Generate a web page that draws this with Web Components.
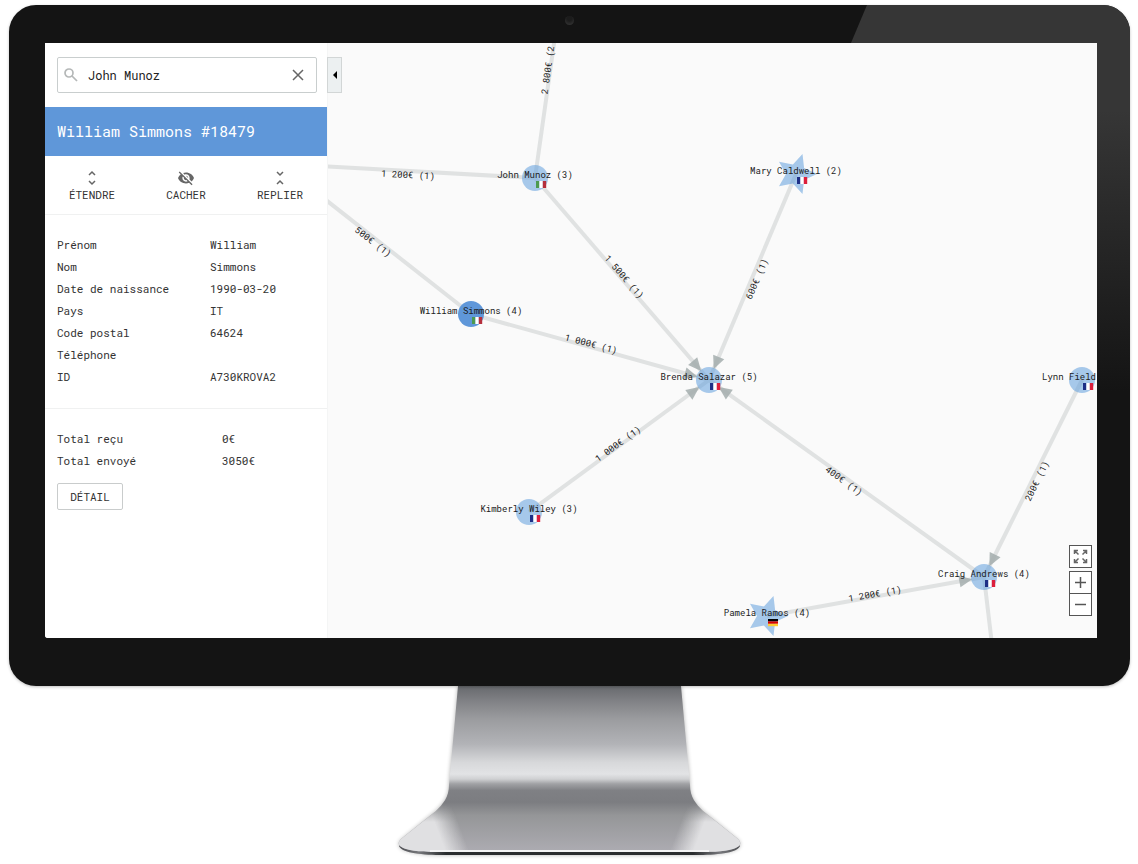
<!DOCTYPE html>
<html lang="fr">
<head>
<meta charset="utf-8">
<title>Exploration du réseau</title>
<style>
  body { margin: 0; background: #fff; font-family: "Roboto Mono", "DejaVu Sans Mono", "Liberation Mono", monospace; color: #333; }
</style>
</head>
<body>
<desktop-monitor>
  <person-panel slot="screen"></person-panel>
  <transfer-graph slot="screen"></transfer-graph>
</desktop-monitor>

<template id="monitor-template">
  <style>
    :host { display: flex; flex-direction: column; min-height: 100vh; box-sizing: border-box; padding: 5px 8px 0 9px; }
    .case { position: relative; flex: 1; display: flex; border-radius: 27px; background: #141414; padding: 38px 33px 48px 36px; box-shadow: 0 1px 3px rgba(0,0,0,.25); }
    .glare { position: absolute; inset: 0; border-radius: 27px; overflow: hidden; }
    .glare::before { content: ""; position: absolute; inset: 0 0 auto auto; width: 440px; height: 420px; background: linear-gradient(#363636 25%, #141414 92%); clip-path: polygon(177px 0, 100% 0, 100% 100%, 0 100%); }
    .camera { position: absolute; top: 11px; left: 50%; width: 9px; height: 9px; margin-left: -5px; border-radius: 50%; background: radial-gradient(circle at 50% 30%, #1c1c1c 30%, #3a3a3a); }
    .screen { position: relative; flex: 1; display: flex; min-width: 0; background: #fafafa; border-radius: 0 0 0 3px; overflow: hidden; }
    .stand { display: block; align-self: center; width: 360px; height: 178px; flex: none; }
  </style>
  <div class="case">
    <div class="glare"></div>
    <div class="camera"></div>
    <div class="screen"><slot name="screen"></slot></div>
  </div>
  <svg class="stand" viewBox="390 686 360 178" aria-hidden="true">
    <defs>
      <linearGradient id="metal" x1="0" y1="686" x2="0" y2="852" gradientUnits="userSpaceOnUse">
        <stop offset="0" stop-color="#67696d"/><stop offset=".09" stop-color="#808185"/>
        <stop offset=".2" stop-color="#9b9c9f"/><stop offset=".35" stop-color="#b2b3b7"/>
        <stop offset=".46" stop-color="#d7d8da"/><stop offset=".53" stop-color="#e2e3e5"/>
        <stop offset=".56" stop-color="#d0d1d3"/><stop offset=".59" stop-color="#a0a1a4"/>
        <stop offset=".63" stop-color="#7f8084"/><stop offset=".7" stop-color="#7c7d81"/>
        <stop offset=".78" stop-color="#959698"/><stop offset="1" stop-color="#adacb2"/>
      </linearGradient>
      <linearGradient id="leftShine" x1="435" y1="824" x2="456" y2="816" gradientUnits="userSpaceOnUse">
        <stop offset="0" stop-color="#e0e0e2"/><stop offset="1" stop-color="#e0e0e2" stop-opacity="0"/>
      </linearGradient>
      <linearGradient id="rightShine" x1="704" y1="824" x2="683" y2="816" gradientUnits="userSpaceOnUse">
        <stop offset="0" stop-color="#e0e0e2"/><stop offset="1" stop-color="#e0e0e2" stop-opacity="0"/>
      </linearGradient>
      <linearGradient id="fade" x1="0" y1="803" x2="0" y2="822" gradientUnits="userSpaceOnUse">
        <stop offset="0" stop-color="#000"/><stop offset="1" stop-color="#fff"/>
      </linearGradient>
      <mask id="fadeIn" maskUnits="userSpaceOnUse" x="390" y="790" width="360" height="74">
        <rect x="390" y="790" width="360" height="74" fill="url(#fade)"/>
      </mask>
      <linearGradient id="rim" x1="398" y1="0" x2="741" y2="0" gradientUnits="userSpaceOnUse">
        <stop offset="0" stop-color="#4b4c50"/><stop offset=".06" stop-color="#77787c"/>
        <stop offset=".14" stop-color="#2a2d2f"/><stop offset=".86" stop-color="#2a2d2f"/>
        <stop offset=".94" stop-color="#77787c"/><stop offset="1" stop-color="#4b4c50"/>
      </linearGradient>
      <filter id="soft" x="-5%" y="-5%" width="110%" height="115%"><feGaussianBlur stdDeviation="2"/></filter>
    </defs>
    <path d="M458 686 449 785C449 797 443 804 436 811L401 840C397 844 399 848 404 850C416 854 430 855 445 855H694C709 855 723 854 735 850C740 848 742 844 738 840L703 811C696 804 690 797 690 785L681 686Z" fill="#000" opacity=".3" filter="url(#soft)"/>
    <path d="M399 846C401 852 418 855 440 855H699C721 855 738 852 740 846L735 840H404Z" fill="url(#rim)"/>
    <path d="M458 686 449 785C449 797 443 804 436 811L401 839C396 844 400 847 406 849C416 852 430 852 445 852H694C709 852 723 852 733 849C739 847 743 844 738 839L703 811C696 804 690 797 690 785L681 686Z" fill="url(#metal)"/>
    <g mask="url(#fadeIn)">
      <path d="M443 800Q441 806 436 811L401 839C396 844 400 847 406 849C416 852 430 852 445 852H490V800Z" fill="url(#leftShine)"/>
      <path d="M696 800Q698 806 703 811L738 839C743 844 739 847 733 849C723 852 709 852 694 852H649V800Z" fill="url(#rightShine)"/>
    </g>
    <path d="M430 851H709" stroke="#f4f4f5" stroke-width="2"/>
  </svg>
</template>

<template id="panel-template">
  <style>
    :host { display: block; flex: none; width: 282px; background: #fff; border-right: 1px solid #f4f5f5; font-size: 11px; line-height: 22px; color: #333; }
    button, input { font: inherit; color: inherit; }
    .search { display: flex; align-items: center; margin: 14px 10px 14px 12px; height: 36px; box-sizing: border-box; border: 1px solid #c9cece; border-radius: 2px; padding: 0 11px 0 6px; }
    .search svg { flex: none; }
    .search input { flex: 1; min-width: 0; border: 0; outline: 0; padding: 0; margin-left: 10px; background: none; font-size: 12px; color: #222; }
    .search button { display: flex; border: 0; padding: 0; background: none; }
    h1 { margin: 0; padding: 0 12px; background: #5f97d9; color: #fff; font-size: 15px; font-weight: 400; line-height: 49px; }
    .actions { display: grid; grid-template-columns: repeat(3, 1fr); border-bottom: 1px solid #f0f1f1; padding: 14px 0 11px; }
    .actions button { display: flex; flex-direction: column; align-items: center; border: 0; padding: 0; background: none; line-height: 17px; }
    table { border-collapse: collapse; }
    th, td { padding: 0; height: 22px; font-weight: 400; text-align: left; }
    section { padding: 19px 12px 20px; border-bottom: 1px solid #f0f1f1; }
    section:last-of-type { border: 0; }
    .facts th { width: 153px; }
    .totals th { width: 165px; }
    .detail { margin-top: 11px; width: 66px; height: 27px; border: 1px solid #c9cccc; border-radius: 2px; padding: 0; background: #fff; line-height: 25px; }
  </style>
  <div class="search">
    <svg width="14" height="14" viewBox="0 0 14 14" fill="none" stroke="#b5b8b8" stroke-width="1.7"><circle cx="5" cy="5" r="4"/><path d="M8 8 13 13"/></svg>
    <input type="text" value="John Munoz" aria-label="Rechercher une personne">
    <button type="button" aria-label="Effacer"><svg width="14" height="14" viewBox="0 0 14 14" stroke="#666" stroke-width="1.5"><path d="M2 2 12 12M12 2 2 12"/></svg></button>
  </div>
  <h1>William Simmons #18479</h1>
  <div class="actions">
    <button type="button"><svg width="16" height="16" viewBox="0 0 16 16" fill="none" stroke="#666" stroke-width="1.5"><path d="M5 5 8 2 11 5M5 11 8 14 11 11"/></svg>ÉTENDRE</button>
    <button type="button"><svg width="16" height="16" viewBox="1 1 22 22" fill="#666"><path d="M12 7c2.76 0 5 2.24 5 5 0 .65-.13 1.26-.36 1.83l2.92 2.92c1.51-1.26 2.7-2.89 3.43-4.75-1.73-4.39-6-7.5-11-7.5-1.4 0-2.74.25-3.98.7l2.16 2.16C10.74 7.13 11.35 7 12 7zM2 4.27l2.28 2.28.46.46C3.08 8.3 1.78 10.02 1 12c1.73 4.39 6 7.5 11 7.5 1.55 0 3.03-.3 4.38-.84l.42.42L19.73 22 21 20.73 3.27 3 2 4.27zM7.53 9.8l1.55 1.55c-.05.21-.08.43-.08.65 0 1.66 1.34 3 3 3 .22 0 .44-.03.65-.08l1.55 1.55c-.67.33-1.41.53-2.2.53-2.76 0-5-2.24-5-5 0-.79.2-1.53.53-2.2zm4.31-.78l3.15 3.15.02-.16c0-1.66-1.34-3-3-3l-.17.01z"/></svg>CACHER</button>
    <button type="button"><svg width="16" height="16" viewBox="0 0 16 16" fill="none" stroke="#666" stroke-width="1.5"><path d="M5 2 8 5 11 2M5 14 8 11 11 14"/></svg>REPLIER</button>
  </div>
  <section>
    <table class="facts">
      <tr><th scope="row">Prénom</th><td>William</td></tr>
      <tr><th scope="row">Nom</th><td>Simmons</td></tr>
      <tr><th scope="row">Date de naissance</th><td>1990-03-20</td></tr>
      <tr><th scope="row">Pays</th><td>IT</td></tr>
      <tr><th scope="row">Code postal</th><td>64624</td></tr>
      <tr><th scope="row">Téléphone</th><td></td></tr>
      <tr><th scope="row">ID</th><td>A730KROVA2</td></tr>
    </table>
  </section>
  <section>
    <table class="totals">
      <tr><th scope="row">Total reçu</th><td>0€</td></tr>
      <tr><th scope="row">Total envoyé</th><td>3050€</td></tr>
    </table>
    <button type="button" class="detail">DÉTAIL</button>
  </section>
</template>

<template id="graph-template">
  <style>
    :host { display: block; position: relative; flex: 1; min-width: 0; background: #fafafa; }
    .map { position: absolute; inset: 0; width: 100%; height: 100%; }
    .map text { font-size: 9px; fill: #1c1c1c; text-anchor: middle; white-space: pre; }
    button { display: flex; align-items: center; justify-content: center; box-sizing: border-box; padding: 0; margin: 0; }
    .fold { position: absolute; top: 14px; left: -1px; width: 15px; height: 36px; border: 1px solid #d2d6d6; background: #ecf0f1; }
    .tools { position: absolute; right: 5px; bottom: 22px; display: flex; flex-direction: column; }
    .tools button { width: 23px; height: 23px; border: 1px solid #555; background: #fff; }
    .tools button:first-child { margin-bottom: 3px; }
    .tools button:last-child { border-top: 0; height: 22px; }
  </style>
  <svg class="map" viewBox="1 0 769 595" preserveAspectRatio="xMidYMid slice" role="img" aria-label="Graphe des virements"></svg>
  <button type="button" class="fold" aria-label="Replier le panneau"><svg width="5" height="8" viewBox="0 0 5 8"><path d="M5 0V8L1 4Z" fill="#000"/></svg></button>
  <div class="tools">
    <button type="button" aria-label="Plein écran"><svg width="15" height="15" viewBox="0 0 30 30" fill="none" stroke="#666" stroke-width="3"><path d="M3 10V3H10M3 3 11 11M20 3H27V10M27 3 19 11M3 20V27H10M3 27 11 19M27 20V27H20M27 27 19 19"/></svg></button>
    <button type="button" aria-label="Zoom avant"><svg width="11" height="11" viewBox="0 0 22 22" stroke="#555" stroke-width="3"><path d="M11 0V22M0 11H22"/></svg></button>
    <button type="button" aria-label="Zoom arrière"><svg width="11" height="11" viewBox="0 0 22 22" stroke="#555" stroke-width="3"><path d="M0 11H22"/></svg></button>
  </div>
</template>

<script>
  const stamp = (host, id) => {
    const root = host.attachShadow({ mode: "open" });
    root.append(document.getElementById(id).content.cloneNode(true));
    return root;
  };

  customElements.define("desktop-monitor", class extends HTMLElement {
    constructor() { super(); stamp(this, "monitor-template"); }
  });

  customElements.define("person-panel", class extends HTMLElement {
    constructor() { super(); stamp(this, "panel-template"); }
  });

  const people = {
    john:     { x: 208, y: 135, name: "John Munoz (3)", flag: "it" },
    william:  { x: 144, y: 271, name: "William Simmons (4)", flag: "it", selected: true },
    brenda:   { x: 382, y: 337, name: "Brenda Salazar (5)", flag: "fr" },
    mary:     { x: 469, y: 131, name: "Mary Caldwell (2)", flag: "fr", star: true },
    kimberly: { x: 202, y: 469, name: "Kimberly Wiley (3)", flag: "fr" },
    craig:    { x: 657, y: 534, name: "Craig Andrews (4)", flag: "fr" },
    lynn:     { x: 755, y: 337, name: "Lynn Field", labelX: 742, flag: "fr" },
    pamela:   { x: 440, y: 573, name: "Pamela Ramos (4)", flag: "de", star: true }
  };
  const off = (x, y) => ({ x, y });
  const transfers = [
    { a: off(232, -35), b: people.john, text: "2 800€ (2", x: 221, y: 27, turn: -82 },
    { a: off(-10, 123), b: people.john, text: "1 200€ (1)", x: 81, y: 132, turn: 3 },
    { a: off(-10, 150), b: people.william, text: "500€ (1)", x: 46, y: 199, turn: 38 },
    { a: people.john, b: people.brenda, arrow: true, text: "1 500€ (1)", x: 297, y: 234, turn: 49 },
    { a: people.william, b: people.brenda, arrow: true, text: "1 000€ (1)", x: 264, y: 301, turn: 15 },
    { a: people.mary, b: people.brenda, arrow: true, text: "600€ (1)", x: 430, y: 236, turn: -67 },
    { a: people.kimberly, b: people.brenda, arrow: true, text: "1 000€ (1)", x: 291, y: 401, turn: -36 },
    { a: people.craig, b: people.brenda, arrow: true, text: "400€ (1)", x: 517, y: 438, turn: 36 },
    { a: people.lynn, b: people.craig, arrow: true, text: "200€ (1)", x: 710, y: 438, turn: -64 },
    { a: people.pamela, b: people.craig, arrow: true, text: "1 200€ (1)", x: 548, y: 551, turn: -10 },
    { a: people.craig, b: off(666, 610) }
  ];
  const flags = {
    fr: ["#1e2f86", "#ffffff", "#dc1f3c"],
    it: ["#4c9a50", "#ffffff", "#b52f3c"],
    de: ["#000000", "#d80000", "#ffcc33"]
  };

  const starPoints = (x, y) => Array.from({ length: 10 }, (_, i) => {
    const r = i % 2 ? 10 : 21, t = i * Math.PI / 5;
    return `${(x + r * Math.cos(t)).toFixed(1)},${(y + r * Math.sin(t)).toFixed(1)}`;
  }).join(" ");

  const drawFlag = (x, y, code) => flags[code].map((c, i) => code === "de"
    ? `<rect x="${x + 1}" y="${y + 3 + i * 2.4}" width="10" height="2.4" fill="${c}"/>`
    : `<rect x="${x + 1 + i * 3.4}" y="${y + 3}" width="3.4" height="7" fill="${c}"/>`).join("");

  const drawArrow = ({ a, b }) => {
    const turn = Math.atan2(b.y - a.y, b.x - a.x) * 180 / Math.PI;
    return `<path d="M-12 0-25-6V6Z" fill="#a3adad" opacity=".85" transform="translate(${b.x} ${b.y}) rotate(${turn.toFixed(1)})"/>`;
  };

  customElements.define("transfer-graph", class extends HTMLElement {
    constructor() {
      super();
      const map = stamp(this, "graph-template").querySelector(".map");
      const nodes = Object.values(people);
      map.innerHTML =
        transfers.map(({ a, b }) => `<line x1="${a.x}" y1="${a.y}" x2="${b.x}" y2="${b.y}" stroke="#e0e2e2" stroke-width="4"/>`).join("") +
        transfers.filter(t => t.arrow).map(drawArrow).join("") +
        nodes.map(n => {
          const paint = n.selected ? 'fill="#5f97d9"' : 'fill="#609edc" fill-opacity=".55"';
          return n.star ? `<polygon points="${starPoints(n.x, n.y)}" ${paint}/>`
                        : `<circle cx="${n.x}" cy="${n.y}" r="13" ${paint}/>`;
        }).join("") +
        nodes.map(n => drawFlag(n.x, n.y, n.flag)).join("") +
        transfers.filter(t => t.text).map(t => `<text transform="translate(${t.x} ${t.y}) rotate(${t.turn})" y="3">${t.text}</text>`).join("") +
        nodes.map(n => `<text x="${n.labelX ?? n.x}" y="${n.y}">${n.name}</text>`).join("");
    }
  });
</script>
</body>
</html>
